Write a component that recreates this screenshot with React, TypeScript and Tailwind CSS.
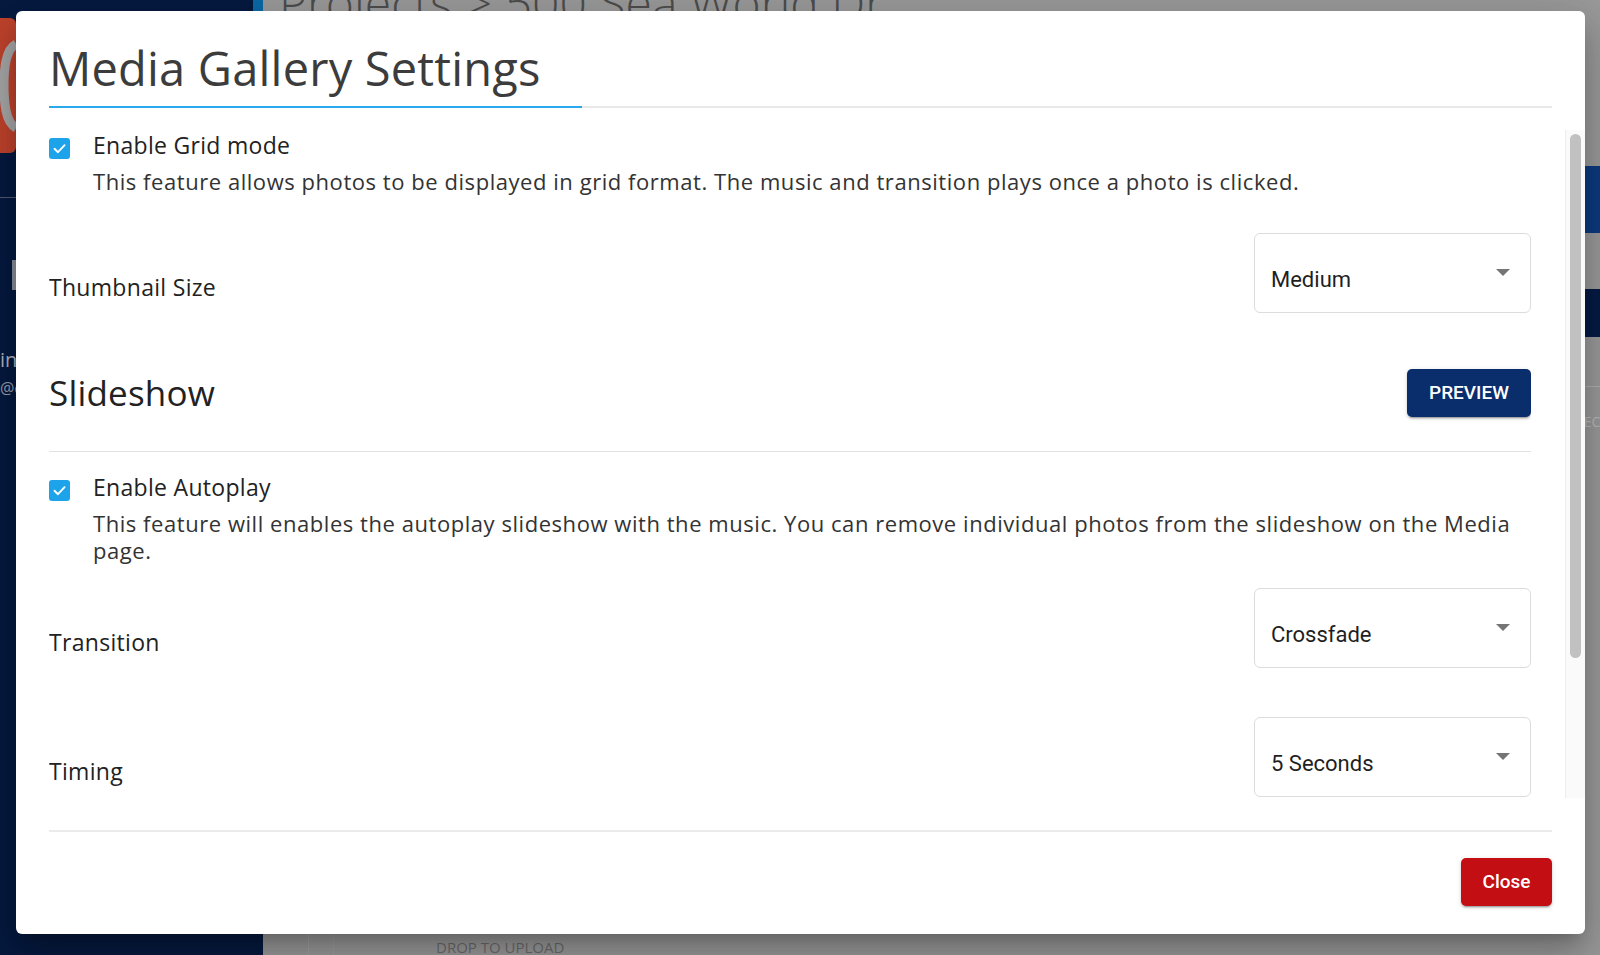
import React from "react";

const ArrowDrop = () => (
  <svg width="14" height="7" viewBox="0 0 14 7" className="mt-[35px] shrink-0">
    <path d="M0 0h14L7 7z" fill="#757575" />
  </svg>
);

function Select({ value }: { value: string }) {
  return (
    <div className="w-[277px] h-[80px] shrink-0 rounded-[6px] border border-[#dcdcdc] bg-white flex items-start justify-between pl-[16px] pr-[20px]">
      <span className="pt-[33px] font-['Roboto',sans-serif] text-[22px] leading-[26px] text-[#1f1f1f]">
        {value}
      </span>
      <ArrowDrop />
    </div>
  );
}

function Row({ label, value, className }: { label: string; value: string; className: string }) {
  return (
    <div className={className}>
      <div className="flex items-start justify-between">
        <div className="mt-[38px] text-[23px] leading-[32px] tracking-[0.3px] text-[#222]">{label}</div>
        <Select value={value} />
      </div>
    </div>
  );
}

const Check = () => (
  <div className="mt-[8px] w-[21px] h-[21px] shrink-0 rounded-[3px] bg-[#1ca3ea] flex items-center justify-center">
    <svg width="21" height="21" viewBox="0 0 21 21">
      <path
        d="M5.5 10.8 9 14.2 15.6 7.2"
        fill="none"
        stroke="white"
        strokeWidth="1.9"
        strokeLinecap="round"
        strokeLinejoin="round"
      />
    </svg>
  </div>
);

function CheckBlock({ label, desc, className }: { label: string; desc: string; className: string }) {
  return (
    <div className={className}>
      <div className="flex gap-[23px]">
        <Check />
        <div className="flex-1 min-w-0">
          <div className="text-[23px] leading-[30px] tracking-[0.3px] text-[#222]">{label}</div>
          <p className="mt-[8px] text-[22px] leading-[27px] tracking-[0.55px] text-[#333]">{desc}</p>
        </div>
      </div>
    </div>
  );
}

export default function App() {
  return (
    <div className="relative flex w-[1600px] h-[955px] overflow-hidden bg-[#9a9a9a] font-['Open_Sans',sans-serif]">
      {/* background app: sidebar */}
      <aside className="w-[263px] shrink-0 flex flex-col bg-[#061a40]">
        <div className="h-[18px] flex justify-end">
          <div className="w-[10px] h-[18px] bg-[#0b69a6]" />
        </div>
        <svg width="16" height="135" viewBox="0 0 16 135" className="shrink-0">
          <rect x="-10" y="0" width="26" height="135" rx="6" fill="#c0432c" />
          <path
            d="M16 26 C 5 32, 4 52, 4 67 C 4 84, 5 104, 16 110"
            fill="none"
            stroke="#a7a7a7"
            strokeWidth="9"
          />
        </svg>
        <div className="mt-[44px] h-px bg-[#4f5a73]" />
        <div className="mt-[62px] ml-[12px] w-[4px] h-[30px] bg-[#8b909b]" />
        <div className="mt-[58px] w-[16px] overflow-hidden text-[20px] leading-[24px] text-[#aeb4bf] whitespace-nowrap">in</div>
        <div className="mt-[6px] w-[16px] overflow-hidden text-[16px] leading-[20px] text-[#9ba1ac] whitespace-nowrap">@e</div>
      </aside>

      {/* background app: main */}
      <main className="flex-1 flex flex-col min-w-0">
        <div className="-mt-[21px] ml-[16px] text-[48px] leading-[48px] font-light text-[#4d4d4d] whitespace-nowrap">
          Projects &gt; 500 Sea World Dr
        </div>
        <div className="flex flex-1">
          <div className="w-[45px] shrink-0" />
          <div className="w-[25px] shrink-0 border-l border-[#a3a3a3]" />
          <div className="flex-1 border-l border-[#a0a0a0] flex flex-col">
            <div className="mt-[910px] ml-[102px] text-[15px] leading-[20px] uppercase text-[#6c6c6c] whitespace-nowrap">
              Drop to upload
            </div>
          </div>
          <div className="w-[60px] shrink-0 flex flex-col">
            <div className="mt-[139px] h-[67px] bg-[#0c3a7f]" />
            <div className="mt-[56px] h-[48px] bg-[#061b44]" />
            <div className="mt-[49px] h-px bg-[#b0b0b0]" />
            <div className="mt-[26px] ml-[36px] text-[14px] leading-[18px] text-[#b9b9b9] whitespace-nowrap">SEC</div>
          </div>
        </div>
      </main>

      {/* modal */}
      <div className="absolute left-[16px] top-[11px] w-[1569px] h-[923px] rounded-[6px] bg-white flex flex-col overflow-hidden shadow-[0_11px_15px_-7px_rgba(0,0,0,0.2),0_24px_38px_3px_rgba(0,0,0,0.14),0_9px_46px_8px_rgba(0,0,0,0.12)]">
        <header className="mx-[33px] flex border-b-2 border-[#e9e9e9]">
          <div className="w-[533px] -mb-[2px] border-b-2 border-[#2ba9ed] pt-[34px] pb-[15px]">
            <h1 className="text-[47px] leading-[46px] tracking-[0.2px] text-[#3c3c3c] whitespace-nowrap">Media Gallery Settings</h1>
          </div>
        </header>

        <div className="mt-[22px] h-[668px] flex">
          <div className="flex-1 ml-[33px] mr-[34px] overflow-hidden">
            <CheckBlock
              className=""
              label="Enable Grid mode"
              desc="This feature allows photos to be displayed in grid format. The music and transition plays once a photo is clicked."
            />
            <Row className="mt-[38px]" label="Thumbnail Size" value="Medium" />
            <div className="mt-[56px] flex h-[48px] items-center justify-between">
              <h2 className="text-[35px] leading-[44px] tracking-[0.2px] text-[#222]">Slideshow</h2>
              <button className="w-[124px] h-[48px] rounded-[5px] bg-[#0a2d6c] text-white text-[19px] font-medium uppercase font-['Roboto',sans-serif] shadow-[0_3px_1px_-2px_rgba(0,0,0,0.2),0_2px_2px_0_rgba(0,0,0,0.14),0_1px_5px_0_rgba(0,0,0,0.12)]">
                Preview
              </button>
            </div>
            <div className="mt-[34px] h-px bg-[#e2e2e2]" />
            <CheckBlock
              className="mt-[20px]"
              label="Enable Autoplay"
              desc="This feature will enables the autoplay slideshow with the music. You can remove individual photos from the slideshow on the Media page."
            />
            <Row className="mt-[24px]" label="Transition" value="Crossfade" />
            <Row className="mt-[49px]" label="Timing" value="5 Seconds" />
          </div>
          <div className="w-[20px] shrink-0 border-l border-[#ededed] bg-[#fafafa] pt-[4px] pl-[4px]">
            <div className="w-[11px] h-[524px] rounded-full bg-[#c1c1c1]" />
          </div>
        </div>

        <footer className="mx-[33px] mt-[32px] border-t-2 border-[#ebebeb] pt-[26px] flex justify-end">
          <button className="w-[91px] h-[48px] rounded-[5px] bg-[#c30e13] text-white text-[19px] font-medium font-['Roboto',sans-serif] shadow-[0_3px_1px_-2px_rgba(0,0,0,0.2),0_2px_2px_0_rgba(0,0,0,0.14),0_1px_5px_0_rgba(0,0,0,0.12)]">
            Close
          </button>
        </footer>
      </div>
    </div>
  );
}
